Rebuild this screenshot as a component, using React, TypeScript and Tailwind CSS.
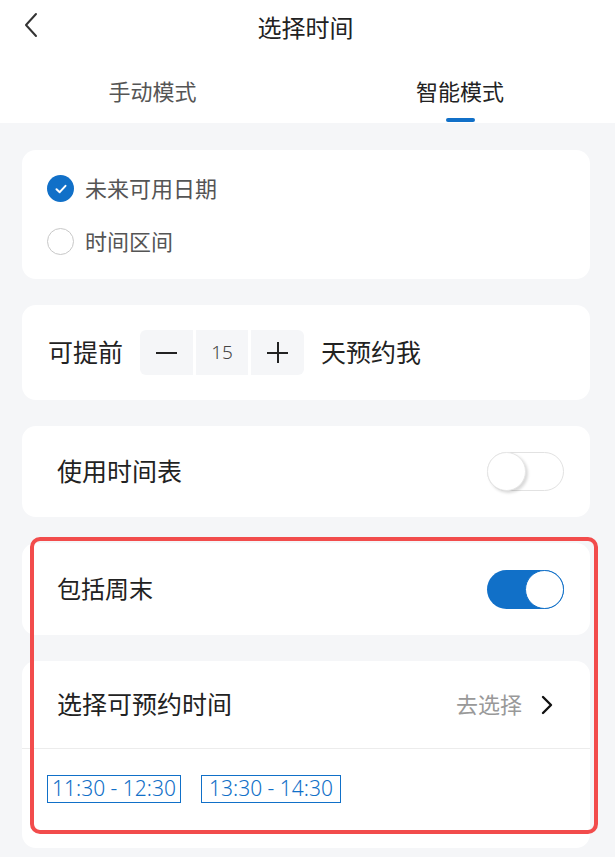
import React from "react";

const font = { fontFamily: '"Noto Sans", "Noto Sans CJK SC", sans-serif' };

function Card({ className = "", children }: { className?: string; children: React.ReactNode }) {
  return <div className={`ml-[22px] w-[568px] rounded-[14px] bg-white ${className}`}>{children}</div>;
}

function Toggle({ on }: { on: boolean }) {
  if (on) {
    return (
      <div className="relative h-[39px] w-[77px] rounded-full bg-[#1170c8]">
        <div className="absolute right-0 top-0 h-[39px] w-[39px] rounded-full border border-[#1170c8] bg-white" />
      </div>
    );
  }
  return (
    <div className="relative h-[39px] w-[77px] rounded-full border border-[#e2e2e2] bg-white">
      <div className="absolute left-[-1px] top-[-1px] h-[39px] w-[39px] rounded-full border border-[#e6e6e6] bg-white shadow-[2px_2px_3px_rgba(0,0,0,0.15)]" />
    </div>
  );
}

export default function App() {
  return (
    <div className="relative min-h-[857px] w-[615px] bg-[#f5f6f8]" style={font}>
      {/* header */}
      <div className="bg-white">
        <div className="relative flex h-[55px] items-center justify-center">
          <svg className="absolute left-[22px] top-[12px]" width="18" height="26" viewBox="0 0 18 26" fill="none">
            <path d="M14 2 L4 13 L14 24" stroke="#333" strokeWidth="2" strokeLinecap="round" strokeLinejoin="round" />
          </svg>
          <span className="-ml-[4px] text-[24px] text-[#222]">选择时间</span>
        </div>
        <div className="flex h-[68px]">
          <div className="flex w-[305px] flex-col items-center pt-[21px]">
            <span className="text-[22px] leading-[30px] text-[#555]">手动模式</span>
          </div>
          <div className="flex flex-1 flex-col items-center pt-[21px]">
            <span className="text-[22px] leading-[30px] text-[#222]">智能模式</span>
            <div className="mt-[12px] h-[4px] w-[29px] rounded-full bg-[#1170c8]" />
          </div>
        </div>
      </div>

      <div className="flex flex-col gap-[26px] pb-[9px] pt-[27px]">
        {/* card 1 */}
        <Card className="h-[129px] pl-[25px] pt-[25px]">
          <div className="flex items-center gap-[11px]">
            <div className="flex h-[27px] w-[27px] items-center justify-center rounded-full bg-[#1170c8]">
              <svg width="14" height="14" viewBox="0 0 14 14" fill="none">
                <path d="M2.5 7.2 L5.7 10.2 L11.5 3.8" stroke="white" strokeWidth="2" strokeLinecap="round" strokeLinejoin="round" />
              </svg>
            </div>
            <span className="text-[22px] leading-[27px] text-[#555]">未来可用日期</span>
          </div>
          <div className="mt-[26px] flex items-center gap-[11px]">
            <div className="h-[27px] w-[27px] rounded-full border border-[#c8c8c8] bg-white" />
            <span className="text-[22px] leading-[27px] text-[#555]">时间区间</span>
          </div>
        </Card>

        {/* card 2 */}
        <Card className="flex h-[95px] items-center pl-[26px]">
          <span className="text-[25px] text-[#222]">可提前</span>
          <div className="ml-[17px] flex gap-[3px]">
            <div className="flex h-[45px] w-[53px] items-center justify-center rounded-l-[6px] bg-[#f5f6f8]">
              <div className="h-[2px] w-[21px] bg-[#222]" />
            </div>
            <div className="flex h-[45px] w-[52px] items-center justify-center bg-[#f5f6f8] text-[19px] font-light text-[#444]">15</div>
            <div className="relative flex h-[45px] w-[53px] items-center justify-center rounded-r-[6px] bg-[#f5f6f8]">
              <div className="h-[2px] w-[21px] bg-[#222]" />
              <div className="absolute h-[21px] w-[2px] bg-[#222]" />
            </div>
          </div>
          <span className="ml-[17px] text-[25px] text-[#222]">天预约我</span>
        </Card>

        {/* card 3 */}
        <Card className="flex h-[91px] items-center justify-between pl-[35px] pr-[26px]">
          <span className="text-[25px] text-[#222]">使用时间表</span>
          <Toggle on={false} />
        </Card>

        {/* card 4 */}
        <Card className="flex h-[92px] items-center justify-between pl-[35px] pr-[26px]">
          <span className="text-[24px] text-[#222]">包括周末</span>
          <Toggle on={true} />
        </Card>

        {/* card 5 */}
        <Card className="">
          <div className="flex h-[88px] items-center justify-between border-b border-[#ececec] pl-[35px] pr-[36px]">
            <span className="text-[25px] text-[#222]">选择可预约时间</span>
            <div className="flex items-center gap-[18px]">
              <span className="text-[22px] text-[#999]">去选择</span>
              <svg width="14" height="22" viewBox="0 0 14 22" fill="none">
                <path d="M3 3 L11 11 L3 19" stroke="#111" strokeWidth="2.4" strokeLinecap="round" strokeLinejoin="round" />
              </svg>
            </div>
          </div>
          <div className="flex h-[99px] items-start gap-[20px] pl-[25px] pt-[26px]">
            <div className="flex h-[28px] w-[134px] items-center justify-center border border-[#1170c8] text-[21px] font-light text-[#1170c8]">11:30 - 12:30</div>
            <div className="flex h-[28px] w-[140px] items-center justify-center border border-[#1170c8] text-[21px] font-light text-[#1170c8]">13:30 - 14:30</div>
          </div>
        </Card>
      </div>

      {/* red annotation */}
      <div className="pointer-events-none absolute left-[30px] top-[537px] h-[297px] w-[568px] rounded-[10px] border-[4px] border-[#f24c4c]" />
    </div>
  );
}
